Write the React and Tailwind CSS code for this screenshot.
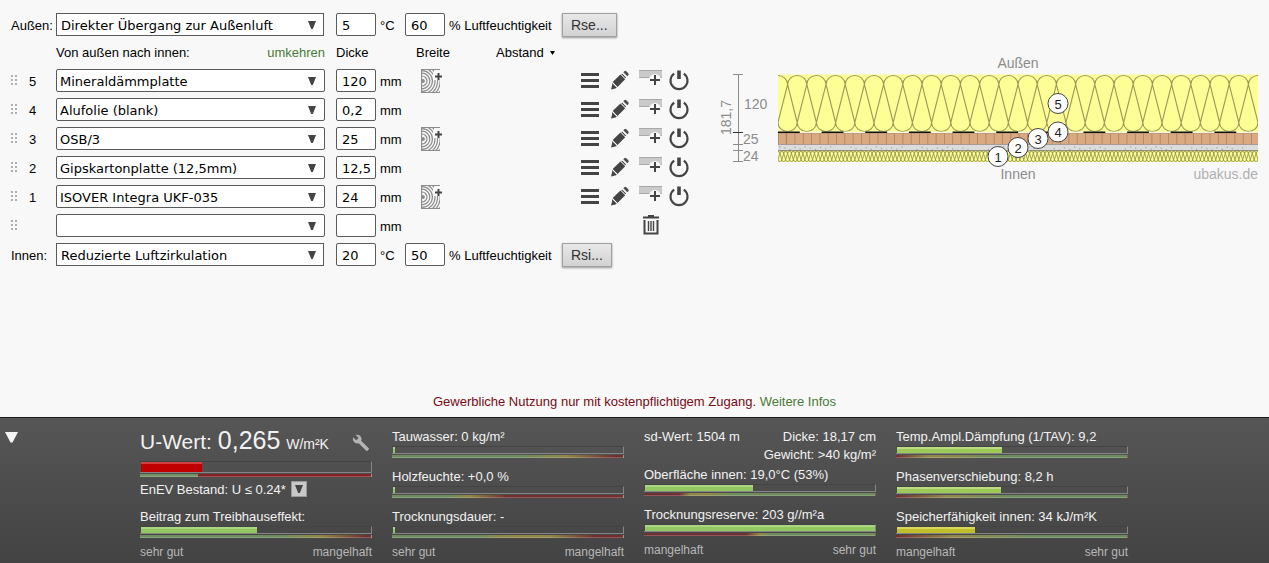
import React from "react";

const SANS = "font-['Liberation_Sans',Arial,sans-serif]";
const FIELD = "font-['DejaVu_Sans',Verdana,sans-serif]";

const layers = [
  { no: 5, name: "Mineraldämmplatte", thickness: "120", wood: true },
  { no: 4, name: "Alufolie (blank)", thickness: "0,2", wood: false },
  { no: 3, name: "OSB/3", thickness: "25", wood: true },
  { no: 2, name: "Gipskartonplatte (12,5mm)", thickness: "12,5", wood: false },
  { no: 1, name: "ISOVER Integra UKF-035", thickness: "24", wood: true },
  { no: null, name: "", thickness: "", wood: false },
];

function Picker({ label, value, square, id }) {
  return (
    <div className="relative w-[269px] shrink-0">
      <select
        id={id}
        aria-label={label}
        defaultValue={value}
        className={`${FIELD} block h-[23px] appearance-none border border-[#5a5a5a] bg-white pt-0.5 text-[13px] text-black ${
          square ? "w-[268px] pl-1" : "w-full rounded-xs pl-[3px]"
        }`}
      >
        <option value={value}>{value}</option>
      </select>
      <svg className="pointer-events-none absolute right-[9px] top-2 h-2 w-2" viewBox="0 0 8 8">
        <path d="M0 0h8L4.800 8H3.200z" fill="#444" />
      </svg>
    </div>
  );
}

function NumberField({ label, value }) {
  return (
    <input
      type="text"
      aria-label={label}
      defaultValue={value}
      className={`${FIELD} h-[23px] w-10 shrink-0 rounded-xs border border-[#5a5a5a] bg-white pl-[5px] pt-0.5 text-[13px] text-black`}
    />
  );
}

function Grip() {
  return (
    <svg className="h-[11px] w-[7px]" viewBox="0 0 7 11" fill="#b0b0b0">
      <path d="M0 0h2v2H0zM4 0h2v2H4zM0 4h2v2H0zM4 4h2v2H4zM0 8h2v2H0zM4 8h2v2H4z" />
    </svg>
  );
}

function WoodIcon() {
  return (
    <svg className="h-6 w-[22px]" viewBox="0 0 22 24">
      <clipPath id="woodClip">
        <path d="M0 0H13V4H12V11H19V24H0z" />
      </clipPath>
      <g clipPath="url(#woodClip)" fill="none" stroke="#8c8c8c" strokeWidth="1.2">
        <path d="M.5 0V24" />
        <circle cx="2" cy="12" r="1.3" fill="#8c8c8c" />
        <circle cx="1" cy="12" r="5" />
        <circle cx="1" cy="12" r="7.8" />
        <circle cx="1" cy="12" r="10.4" />
        <circle cx="1" cy="12" r="13" />
        <circle cx="1" cy="12" r="15.6" />
        <circle cx="1" cy="12" r="18.2" />
        <circle cx="1" cy="12" r="20.8" />
      </g>
      <path d="M0 .5H19M0 23.5H19" stroke="#8c8c8c" />
      <path d="M14 7.5H21M17.5 4V11" stroke="#444" strokeWidth="2" />
    </svg>
  );
}

function MenuIcon() {
  return (
    <svg className="h-6 w-6" viewBox="0 0 24 24" fill="#444">
      <path d="M3 4h18v3H3zM3 10h18v3H3zM3 16h18v3H3z" />
    </svg>
  );
}

function PencilIcon() {
  return (
    <svg className="h-6 w-6" viewBox="0 0 24 24" fill="#444">
      <path d="M16.300 2.300q1-1 2 0l2 2q1 1 0 2l-1 1-4-4zM14.300 4.300l4 4-1 1-4-4z" opacity=".95" />
      <path d="M12.400 5.400l4.800 4.800-7.700 7.700-4.800-4.800zM4 13.900l4.800 4.800-1.500.7L3 20.600l1.200-4.600z" />
      <path d="M14 4l5 5M4.400 13.400l5 5" stroke="#f8f8f8" strokeWidth=".8" />
    </svg>
  );
}

function InsertIcon() {
  return (
    <svg className="h-6 w-6" viewBox="0 0 24 24">
      <path d="M1 1h23v7H1z" fill="#cacaca" />
      <path d="M1 1.500h23M1 8.500h23" stroke="#a9a9a9" />
      <circle cx="17" cy="11" r="6" fill="#f8f8f8" />
      <path d="M12 11h10M17 6v10" stroke="#444" strokeWidth="2" />
    </svg>
  );
}

function PowerIcon() {
  return (
    <svg className="h-6 w-6" viewBox="0 0 24 24" fill="none" stroke="#444">
      <path d="M6.200 4.600a8.500 8.500 0 1 0 9.600 0" strokeWidth="2.100" />
      <path d="M11 1.500v8.500" strokeWidth="3.600" />
    </svg>
  );
}

function TrashIcon() {
  return (
    <svg className="h-6 w-6" viewBox="0 0 24 24" fill="none" stroke="#444">
      <path d="M5 3.500h16" strokeWidth="2" />
      <path d="M10 2h6" strokeWidth="2" />
      <path d="M6.500 6v13.500h13V6" strokeWidth="2" />
      <path d="M10.500 7v10M13 7v10M15.500 7v10" strokeWidth="1.400" />
    </svg>
  );
}

function IconButton({ label, children }) {
  return (
    <button type="button" aria-label={label} className="flex h-6 w-[30px] items-center justify-center">
      {children}
    </button>
  );
}

function BoundaryRow({ label, id, surface, temperature, humidity, action }) {
  return (
    <div className="flex h-[23px] items-center">
      <label htmlFor={id} className="w-[45px] shrink-0 pt-0.5">{label}</label>
      <Picker id={id} label={label} value={surface} square />
      <div className="ml-[11px] flex items-center">
        <NumberField label={`${label} Temperatur`} value={temperature} />
        <span className="w-[29px] pl-1 pt-0.5">°C</span>
        <NumberField label={`${label} Luftfeuchtigkeit`} value={humidity} />
        <span className="w-[117px] whitespace-nowrap pl-1 pt-0.5">% Luftfeuchtigkeit</span>
        <button
          type="button"
          className="h-6 border border-[#a0a0a0] bg-linear-to-b from-[#e8e8e8] to-[#d2d2d2] px-2 text-sm leading-5 text-[#333] shadow-[0_1px_2px_rgba(0,0,0,0.4)]"
        >
          {action}
        </button>
      </div>
    </div>
  );
}

function LayerRow({ layer }) {
  const tag = layer.no ? `Schicht ${layer.no}` : "Neue Schicht";
  return (
    <div className="flex h-[23px] items-center">
      <div className="flex w-[45px] shrink-0 items-center">
        <span className="w-[18px]"><Grip /></span>
        <span className="pt-0.5">{layer.no}</span>
      </div>
      <Picker label={tag} value={layer.name} />
      <div className="ml-[11px] flex items-center">
        <NumberField label={`${tag} Dicke`} value={layer.thickness} />
        <span className="w-[45px] pl-1 pt-0.5">mm</span>
        <div className="w-[154px]">
          {layer.wood && (
            <button type="button" aria-label="Holzanteil hinzufügen" className="block">
              <WoodIcon />
            </button>
          )}
        </div>
        {layer.no ? (
          <div className="flex">
            <IconButton label="Menü"><MenuIcon /></IconButton>
            <IconButton label="Bearbeiten"><PencilIcon /></IconButton>
            <IconButton label="Schicht einfügen"><InsertIcon /></IconButton>
            <IconButton label="Ein/Aus"><PowerIcon /></IconButton>
          </div>
        ) : (
          <div className="flex pl-[60px]">
            <IconButton label="Löschen"><TrashIcon /></IconButton>
          </div>
        )}
      </div>
    </div>
  );
}

function insulation(x0, count, period, top, bottom, r) {
  const h = period / 2;
  let d = "";
  for (let i = 0; i <= count; i++) {
    const c = x0 + i * period;
    d += `M${c} ${bottom - r}L${c - h} ${top + r}A${h} ${r} 0 0 1 ${c + h} ${top + r}L${c} ${bottom - r}`;
    d += `M${c} ${bottom - r}A${h} ${r} 0 0 0 ${c + period} ${bottom - r}`;
  }
  return d;
}

const specks = Array.from({ length: 75 }, (_, i) => [
  64 + ((i * 137.3) % 478),
  96.200 + ((i * 2.700) % 3.500),
]);

const markers = [
  [1, 283, 106.500],
  [2, 303, 97.500],
  [3, 323, 88.500],
  [4, 343, 82],
  [5, 343, 53.500],
];

function CrossSection() {
  return (
    <svg
      className={`${SANS} h-[140px] w-[543px]`}
      viewBox="0 0 543 140"
      fontSize="14"
      fill="#8c8c8c"
      role="img"
      aria-label="Querschnitt des Bauteils"
    >
      <clipPath id="sectionClip"><rect x="63" y="24" width="480" height="88" /></clipPath>
      <g clipPath="url(#sectionClip)">
        <rect x="63" y="24.500" width="480" height="58.500" fill="#fefe97" />
        <path d={insulation(63, 25, 19.2, 25.5, 81.5, 9)} fill="none" stroke="#9b9a58" strokeWidth="1.100" />
        <path d="M63 82.500H543" stroke="#f5f5e0" strokeWidth="1.500" />
        <path d="M63 82.200H543" stroke="#111" strokeWidth="1.500" strokeDasharray="21.820 21.820" />
        <rect x="63" y="83" width="480" height="12" fill="#d9a981" />
        <path d="M63 83.500H543" stroke="#c09878" strokeWidth=".8" />
        <path d="M71.300 83v11.500" stroke="#ab8463" strokeWidth="1" />
        <path d="M63 89H543" stroke="#ab8463" strokeWidth="11.500" strokeDasharray=".8 7.500" strokeDashoffset="-8.300" />
        <rect x="63" y="95" width="480" height="6" fill="#dcdcdc" />
        <path d="M63 94.500H543" stroke="#999" strokeWidth=".8" />
        {specks.map(([x, y], i) => (
          <rect key={i} x={x} y={y} width="1.400" height="1.200" fill="#aaa" />
        ))}
        <rect x="63" y="101" width="480" height="11" fill="#fefe97" />
        <path d="M63 100.700H543" stroke="#777755" strokeWidth=".9" />
        <path d={insulation(63, 125, 3.84, 101.5, 111.5, 1.8)} fill="none" stroke="#8a8a4a" strokeWidth=".8" />
      </g>
      <g stroke="#8c8c8c">
        <path d="M23.500 24.500V112M18 24.500H28M18 94.500H28M18 100.500H28M18 111.500H28" />
        <path d="M18 82.500H28" stroke="#333" />
      </g>
      <text x="29" y="59">120</text>
      <text x="28" y="94">25</text>
      <text x="28" y="111">24</text>
      <text transform="translate(16 85) rotate(-90)">181,7</text>
      <text x="303" y="18" textAnchor="middle">Außen</text>
      <text x="303" y="129" textAnchor="middle">Innen</text>
      <text x="543" y="129" textAnchor="end" fill="#b0b0b0">ubakus.de</text>
      {markers.map(([n, x, y]) => (
        <g key={n}>
          <circle cx={x} cy={y} r="10" fill="#fff" stroke="#444" />
          <text x={x} y={y + 5} textAnchor="middle" fontSize="13" fill="#222">{n}</text>
        </g>
      ))}
    </svg>
  );
}

const GREEN = "border-[#acd583] bg-[#92c762]";
const LIME = "border-[#bbdc80] bg-[#9cc957]";
const YELLOW = "border-[#d8d75c] bg-[#c1be2c]";
const RED = "border-[#d04040] bg-[#c00000]";

function Gauge({ percent, tone, scale, tall }) {
  return (
    <div className="w-full">
      <div
        className={`${tall ? "h-3" : "h-2"} border-b border-r border-t border-b-[#858585] border-r-[#858585] border-t-[#434343] pl-px`}
      >
        <div className={`h-full border-t-2 ${tone}`} style={{ width: `${percent}%` }} />
      </div>
      <div className={`mt-px h-[3px] border-b border-r border-b-white/20 border-r-white/20 ${scale}`} />
    </div>
  );
}

function Meter({ text, ...gauge }) {
  return (
    <div>
      <div className="whitespace-nowrap">{text}</div>
      <Gauge {...gauge} />
    </div>
  );
}

function Legend({ from, to }) {
  return (
    <div className="mt-[5px] flex justify-between text-xs leading-[18px] text-[#b8b8b8]">
      <span>{from}</span>
      <span>{to}</span>
    </div>
  );
}

function Results() {
  return (
    <footer className="grid grid-cols-[1fr_auto_1fr] border-t border-[#1c1c1c] bg-linear-to-b from-[#565656] to-[#434343] pb-[2px] pt-2.5 text-[13px] leading-[18px] text-[#f2f2f2]">
      <div className="pl-[5px] pt-1">
        <button type="button" aria-label="Ergebnisse einklappen" className="block">
          <svg className="h-[11px] w-[13px]" viewBox="0 0 13 11"><path d="M0 0h13L7.500 10.500h-2z" fill="#f4f4f4" /></svg>
        </button>
      </div>
      <div className="grid grid-cols-[232px_232px_232px_232px] gap-5 pr-px">
        <section>
          <div className="flex h-[33px] items-start justify-between">
            <div className="whitespace-nowrap text-[21px] leading-6">
              U-Wert: <span className="text-[25px]">0,265</span> <span className="text-sm">W/m²K</span>
            </div>
            <button type="button" aria-label="Einstellungen" className="mr-0.5 mt-1.5">
              <svg className="h-[18px] w-[18px]" viewBox="0 0 18 18">
                <path
                  d="M1 3.200L4.200 6.200L6.600 4L3.700 1C6.400.2 9.200 1.600 9.500 4.700C9.600 5.500 9.500 6.200 9.200 6.800L16.700 14.200Q17.200 14.800 16.700 15.400L15.400 16.700Q14.800 17.200 14.200 16.700L6.700 9.200C3.300 10.300.1 7 1 3.200z"
                  fill="#b4b4b4"
                />
              </svg>
            </button>
          </div>
          <Gauge tall percent={26.5} tone={RED} scale="bg-[linear-gradient(to_right,#748f62_25%,#852328_25%)]" />
          <div className="mt-1 flex items-start gap-[5px]">
            <span>EnEV Bestand: U ≤ 0.24*</span>
            <button
              type="button"
              aria-label="Anforderung wählen"
              className="flex h-4 w-4 items-center justify-center border border-[#999] bg-[#c8c8c8]"
            >
              <svg className="h-2 w-2" viewBox="0 0 8 8"><path d="M0 0h8L4.800 8H3.200z" fill="#444" /></svg>
            </button>
          </div>
          <div className="mt-[9px]">
            <Meter
              text="Beitrag zum Treibhauseffekt:"
              percent={50.5}
              tone={GREEN}
              scale="bg-[linear-gradient(to_right,#6d8b5c_60%,#8f8848_78%,#702f30_98%)]"
            />
          </div>
          <Legend from="sehr gut" to="mangelhaft" />
        </section>
        <section>
          <div className="flex flex-col gap-2.5">
            <Meter text="Tauwasser: 0 kg/m²" percent={1} tone={GREEN} scale="bg-[linear-gradient(to_right,#6d8b5c_55%,#8f8848_75%,#702f30_96%)]" />
            <Meter text="Holzfeuchte: +0,0 %" percent={1} tone={GREEN} scale="bg-[linear-gradient(to_right,#6d8b5c_25%,#8f8848_33%,#702f30_50%)]" />
            <Meter text="Trocknungsdauer: -" percent={1} tone={GREEN} scale="bg-[linear-gradient(to_right,#6d8b5c_38%,#8f8848_48%,#8f8848_68%,#702f30_88%)]" />
          </div>
          <Legend from="sehr gut" to="mangelhaft" />
        </section>
        <section>
          <div className="mb-0.5 flex justify-between">
            <span>sd-Wert: 1504 m</span>
            <span className="text-right">Dicke: 18,17 cm<br />Gewicht: &gt;40 kg/m²</span>
          </div>
          <div className="flex flex-col gap-2.5">
            <Meter text="Oberfläche innen: 19,0°C (53%)" percent={47} tone={GREEN} scale="bg-[linear-gradient(to_right,#702f30_15%,#8f8848_20%,#8f8848_27%,#6d8b5c_40%)]" />
            <Meter text="Trocknungsreserve: 203 g//m²a" percent={100} tone={GREEN} scale="bg-[linear-gradient(to_right,#702f30_44%,#8f8848_50%,#6d8b5c_56%)]" />
          </div>
          <Legend from="mangelhaft" to="sehr gut" />
        </section>
        <section>
          <div className="flex flex-col gap-2.5">
            <Meter text="Temp.Ampl.Dämpfung (1/TAV): 9,2" percent={45.5} tone={LIME} scale="bg-[linear-gradient(to_right,#702f30_0%,#8f8848_14%,#8f8848_20%,#6d8b5c_45%)]" />
            <Meter text="Phasenverschiebung: 8,2 h" percent={45} tone={LIME} scale="bg-[linear-gradient(to_right,#702f30_0%,#8f8848_22%,#6d8b5c_48%)]" />
            <Meter text="Speicherfähigkeit innen: 34 kJ/m²K" percent={34} tone={YELLOW} scale="bg-[linear-gradient(to_right,#702f30_0%,#8f8848_25%,#6d8b5c_60%)]" />
          </div>
          <Legend from="mangelhaft" to="sehr gut" />
        </section>
      </div>
    </footer>
  );
}

export default function App() {
  return (
    <div className={`${SANS} flex min-h-screen flex-col bg-[#f8f8f8] text-[13px] leading-[18px] text-black`}>
      <main className="flex flex-1 items-start justify-between px-[11px]">
        <form className="flex flex-col gap-1.5 pt-[13px]">
          <BoundaryRow id="aussen" label="Außen:" surface="Direkter Übergang zur Außenluft" temperature="5" humidity="60" action="Rse..." />
          <div className="flex h-[21px] items-center pl-[45px]">
            <div className="flex w-[269px] justify-between">
              <span>Von außen nach innen:</span>
              <a href="#umkehren" className="text-[#4a7a35]">umkehren</a>
            </div>
            <span className="ml-[11px] w-20">Dicke</span>
            <span className="w-20">Breite</span>
            <button type="button" className="flex items-center gap-1.5">
              Abstand
              <svg className="h-1 w-[5px]" viewBox="0 0 5 4"><path d="M0 0h5L2.500 4z" /></svg>
            </button>
          </div>
          {layers.map((layer) => (
            <LayerRow key={layer.no ?? "new"} layer={layer} />
          ))}
          <BoundaryRow id="innen" label="Innen:" surface="Reduzierte Luftzirkulation" temperature="20" humidity="50" action="Rsi..." />
        </form>
        <div className="pt-[50px]">
          <CrossSection />
        </div>
      </main>
      <p className="pb-1.5 text-center text-[#780a14]">
        Gewerbliche Nutzung nur mit kostenpflichtigem Zugang.{" "}
        <a href="#infos" className="text-[#4a7a35]">Weitere Infos</a>
      </p>
      <Results />
    </div>
  );
}
